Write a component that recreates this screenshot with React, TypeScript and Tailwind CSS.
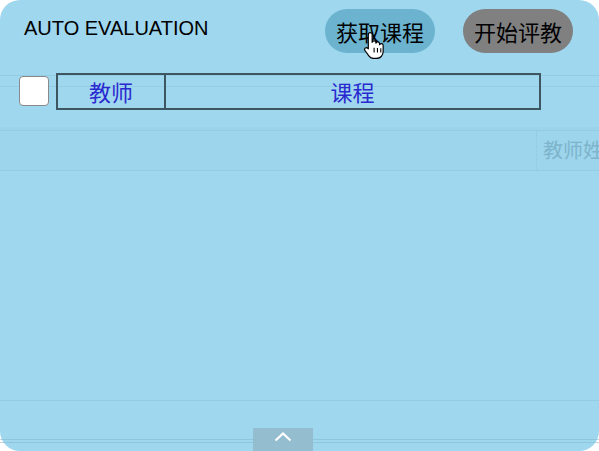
import React from "react";

const cjk = { fontFamily: '"Noto Sans CJK SC", "Noto Sans", sans-serif' };
const latin = { fontFamily: '"Liberation Sans", Arial, sans-serif' };

function HandCursor() {
  return (
    <svg width="22" height="28" viewBox="0 0 20 26" className="absolute left-[363px] top-[31px]">
      <path
        d="M6.5 1.5c1 0 1.8.8 1.8 1.8v7.2c.3-.9 1-1.4 1.8-1.4 1 0 1.7.7 1.7 1.6v.6c.3-.7.9-1.1 1.7-1.1 1 0 1.7.7 1.7 1.6v.9c.3-.6.9-.9 1.6-.9 1 0 1.7.7 1.7 1.7v5.6c0 3.6-2.6 6.4-6.2 6.4H9.6c-2 0-3.3-.9-4.4-2.4l-3.6-5c-.6-.8-.4-1.9.4-2.4.8-.5 1.7-.3 2.3.4l.4.5V3.3c0-1 .8-1.8 1.8-1.8z"
        fill="#fff"
        stroke="#000"
        strokeWidth="1.1"
        strokeLinejoin="round"
      />
      <path d="M10.1 15.5v4.5M13.2 15.8v4.2M16.3 16v4" stroke="#000" strokeWidth="1" />
    </svg>
  );
}

function PanelLines() {
  return (
    <div className="absolute inset-0 flex flex-col pointer-events-none">
      <div className="h-[75px] shrink-0" />
      <div className="h-[11px] shrink-0 border-t border-[#93cde3]" />
      <div className="h-[41px] shrink-0 border-t border-[#93cde3]" />
      <div className="h-[3px] shrink-0 bg-[#9bd3ea]" />
      <div className="h-[40px] shrink-0 border-t border-[#93cde3] bg-[#9cd5ec]" />
      <div className="h-[230px] shrink-0 border-t border-[#93cde3]" />
      <div className="h-[39px] shrink-0 border-t border-[#93cde3]" />
      <div className="h-[3px] shrink-0 border-t border-[#8fc6dc]" />
      <div className="h-[9px] shrink-0 border-t border-[#8fc6dc]" />
    </div>
  );
}

export default function App() {
  return (
    <div className="relative w-[599px] h-[451px] bg-white overflow-hidden">
      {/* background lines behind panel */}
      <div className="absolute inset-0 flex flex-col">
        <div className="h-[439px] shrink-0" />
        <div className="h-[3px] shrink-0 border-t border-[#c7d3d8]" />
        <div className="h-[9px] shrink-0 border-t border-[#c7d3d8]" />
      </div>

      <div className="relative flex flex-col w-[599px] h-[451px] rounded-[20px] bg-[#9fd7ee] overflow-hidden">
        <PanelLines />

        {/* header */}
        <div className="relative flex items-center h-[44px] mt-[9px] pl-[24px] pr-[26px]">
          <div className="text-[20px] leading-none text-black -mt-[6px]" style={latin}>
            AUTO EVALUATION
          </div>
          <div className="ml-auto flex gap-[28px]">
            <button
              className="w-[110px] h-[44px] rounded-full bg-[#6bb3cf] text-[22px] text-black leading-none"
              style={cjk}
            >
              获取课程
            </button>
            <button
              className="w-[110px] h-[44px] rounded-full bg-[#808080] text-[22px] text-black leading-none"
              style={cjk}
            >
              开始评教
            </button>
          </div>
        </div>

        {/* table header row */}
        <div className="relative flex items-start mt-[20px] pl-[19px]">
          <div className="mt-[3px] w-[30px] h-[30px] rounded-[4px] bg-white border border-[#8a8a8a]" />
          <div className="ml-[7px] flex h-[37px] w-[485px] border-2 border-[#3e5662]">
            <div
              className="w-[108px] flex items-center justify-center text-[22px] text-[#2a2ad0] border-r-2 border-[#3e5662]"
              style={cjk}
            >
              教师
            </div>
            <div
              className="flex-1 flex items-center justify-center text-[22px] text-[#2a2ad0]"
              style={cjk}
            >
              课程
            </div>
          </div>
        </div>

        {/* overflowing data row */}
        <div className="relative flex h-[40px] mt-[20px] overflow-hidden">
          <div
            className="ml-[536px] border-l border-dotted border-[#8fc7dc] flex items-center pl-[6px] text-[20px] text-[#7eb4cb] whitespace-nowrap"
            style={cjk}
          >
            教师姓名
          </div>
        </div>

        {/* collapse button */}
        <div className="relative mt-auto ml-[253px] w-[60px] h-[23px] bg-[#94bdcf] flex justify-center pt-[4px]">
          <svg width="18" height="10" viewBox="0 0 18 10">
            <path d="M1.5 8.5L9 1.5l7.5 7" fill="none" stroke="#fff" strokeWidth="2.2" />
          </svg>
        </div>

        <HandCursor />
      </div>
    </div>
  );
}
